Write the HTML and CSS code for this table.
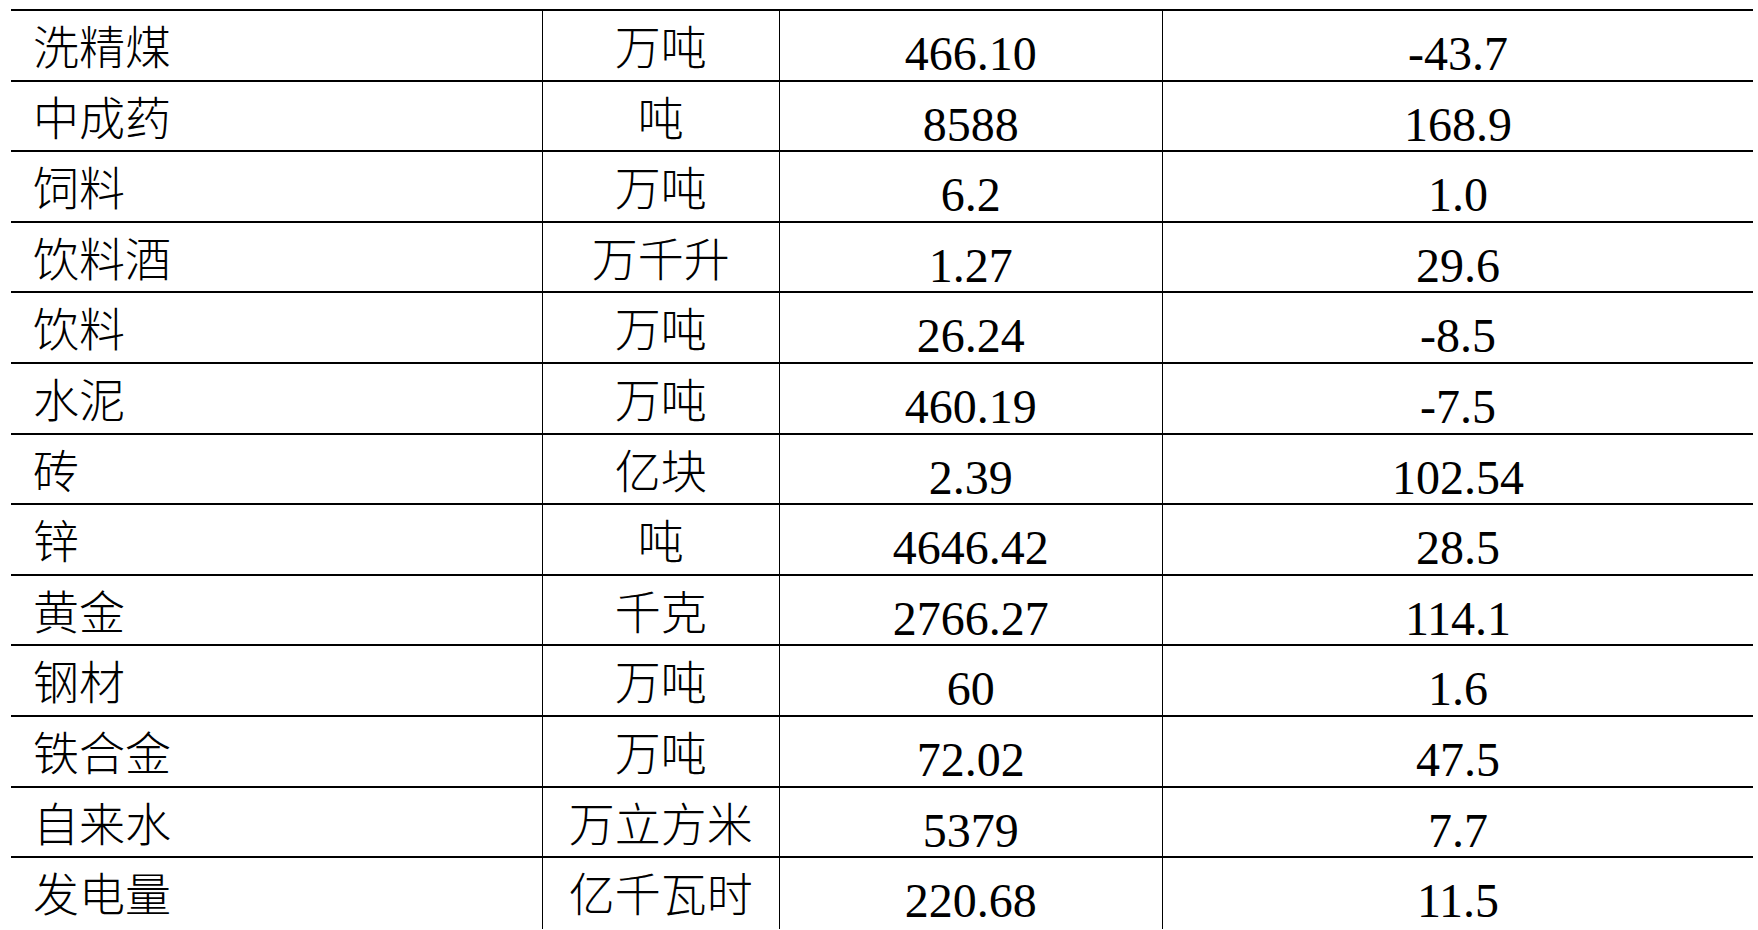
FILE: index.html
```html
<!DOCTYPE html>
<html lang="zh-CN">
<head>
<meta charset="utf-8">
<title>工业产品产量</title>
<link rel="stylesheet" href="styles.css">
</head>
<body>
<div class="sheet">
  <div class="row"><div class="c name">洗精煤</div><div class="c unit">万吨</div><div class="c num">466.10</div><div class="c num">-43.7</div></div>
  <div class="row"><div class="c name">中成药</div><div class="c unit">吨</div><div class="c num">8588</div><div class="c num">168.9</div></div>
  <div class="row"><div class="c name">饲料</div><div class="c unit">万吨</div><div class="c num">6.2</div><div class="c num">1.0</div></div>
  <div class="row"><div class="c name">饮料酒</div><div class="c unit">万千升</div><div class="c num">1.27</div><div class="c num">29.6</div></div>
  <div class="row"><div class="c name">饮料</div><div class="c unit">万吨</div><div class="c num">26.24</div><div class="c num">-8.5</div></div>
  <div class="row"><div class="c name">水泥</div><div class="c unit">万吨</div><div class="c num">460.19</div><div class="c num">-7.5</div></div>
  <div class="row"><div class="c name">砖</div><div class="c unit">亿块</div><div class="c num">2.39</div><div class="c num">102.54</div></div>
  <div class="row"><div class="c name">锌</div><div class="c unit">吨</div><div class="c num">4646.42</div><div class="c num">28.5</div></div>
  <div class="row"><div class="c name">黄金</div><div class="c unit">千克</div><div class="c num">2766.27</div><div class="c num">114.1</div></div>
  <div class="row"><div class="c name">钢材</div><div class="c unit">万吨</div><div class="c num">60</div><div class="c num">1.6</div></div>
  <div class="row"><div class="c name">铁合金</div><div class="c unit">万吨</div><div class="c num">72.02</div><div class="c num">47.5</div></div>
  <div class="row"><div class="c name">自来水</div><div class="c unit">万立方米</div><div class="c num">5379</div><div class="c num">7.7</div></div>
  <div class="row last"><div class="c name">发电量</div><div class="c unit">亿千瓦时</div><div class="c num">220.68</div><div class="c num">11.5</div></div>
</div>
</body>
</html>
```
FILE: styles.css
```css
html, body {
  margin: 0;
  padding: 0;
  background: #fff;
  overflow: hidden;
}
body {
  color: #000;
  font-family: "Liberation Serif", "Noto Sans CJK SC", serif;
}
.sheet {
  margin: 9px 0 0 11px;
  width: 1742px;
  border-top: 2px solid #000;
}
.row {
  display: grid;
  grid-template-columns: 531px 236.5px 383.5px 591px;
  height: 70.6px;
}
.c {
  box-sizing: border-box;
  border-bottom: 2px solid #000;
  display: flex;
  align-items: flex-start;
  line-height: 1;
  white-space: nowrap;
}
.c + .c {
  border-left: 1.5px solid #000;
}
.row.last .c {
  border-bottom: none;
}
.name {
  font-size: 46px;
  font-weight: 300;
  padding: 15px 0 0 22px;
  justify-content: flex-start;
}
.unit {
  font-size: 46px;
  font-weight: 300;
  padding-top: 15px;
  justify-content: center;
}
.num {
  font-size: 48px;
  padding-top: 19px;
  justify-content: center;
}
```
